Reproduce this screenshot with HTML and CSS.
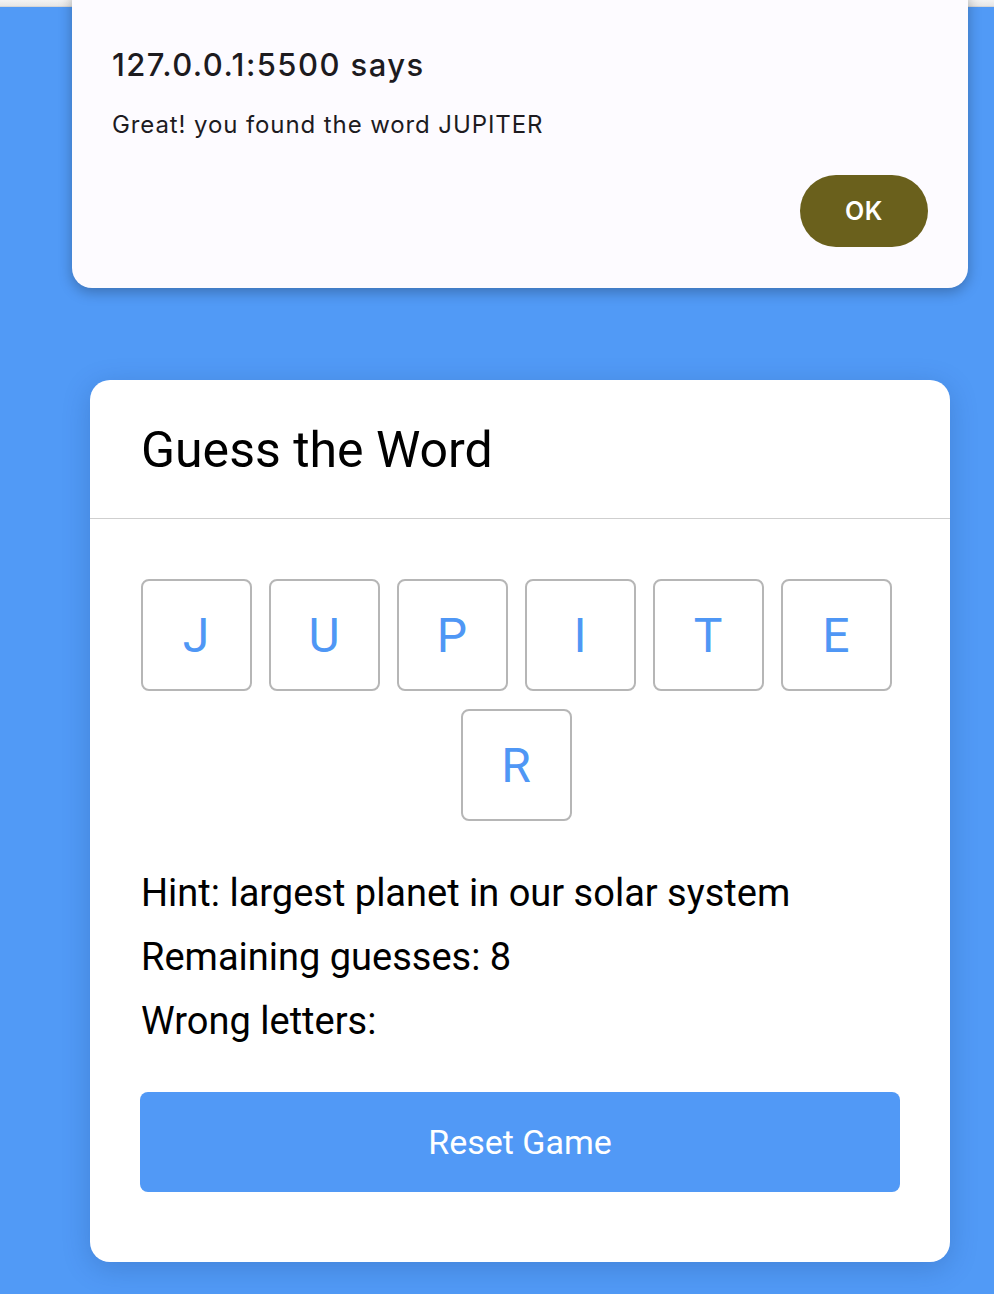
FILE: index.html
```html
<!DOCTYPE html>
<html lang="en">
<head>
<meta charset="utf-8">
<title>Guess the Word</title>
<link rel="stylesheet" href="styles.css">
</head>
<body>
<div class="topbar"></div>
<main class="page">
  <section class="card">
    <header class="card-header">
      <h1 class="card-title">Guess the Word</h1>
    </header>
    <div class="card-body">
      <div class="word">
        <div class="letter">J</div>
        <div class="letter">U</div>
        <div class="letter">P</div>
        <div class="letter">I</div>
        <div class="letter">T</div>
        <div class="letter">E</div>
        <div class="letter">R</div>
      </div>
      <p class="info">Hint: largest planet in our solar system</p>
      <p class="info">Remaining guesses: 8</p>
      <p class="info">Wrong letters:</p>
      <button class="reset" type="button">Reset Game</button>
    </div>
  </section>
</main>
<div class="dialog" role="alertdialog">
  <div class="dialog-title">127.0.0.1:5500 says</div>
  <div class="dialog-message">Great! you found the word JUPITER</div>
  <div class="dialog-actions">
    <button class="dialog-ok" type="button">OK</button>
  </div>
</div>
</body>
</html>
```

FILE: styles.css
```css
* { box-sizing: border-box; }

html, body {
  margin: 0;
  padding: 0;
}

body {
  background: #519af6;
  font-family: Roboto, "Liberation Sans", Arial, sans-serif;
  min-height: 1294px;
  position: relative;
  overflow: hidden;
}

.topbar {
  height: 7px;
  background: linear-gradient(#f3f3f3, #e6e6e6);
  border-bottom: 1px solid #d6d6d6;
}

.page {
  padding: 373px 44px 0 90px;
}

.card {
  width: 860px;
  background: #ffffff;
  border-radius: 20px;
  box-shadow: 0 6px 28px rgba(20, 50, 110, 0.22);
}

.card-header {
  padding: 42px 50px 40px 51px;
  border-bottom: 1px solid #cfcfcf;
}

.card-title {
  margin: 0;
  font-size: 50px;
  line-height: 56px;
  font-weight: 400;
  color: #000;
}

.card-body {
  padding: 60px 50px 70px 50px;
}

.word {
  display: flex;
  flex-wrap: wrap;
  justify-content: center;
  gap: 18px 17px;
  padding-right: 8px;
  margin-bottom: 50px;
}

.letter {
  width: 111px;
  height: 112px;
  border: 2px solid #b6b6b6;
  border-radius: 8px;
  display: flex;
  align-items: center;
  justify-content: center;
  font-size: 48px;
  color: #4f97f5;
}

.info {
  margin: 0 0 20px 1px;
  font-size: 38px;
  line-height: 44px;
  color: #000;
}

.info:last-of-type {
  margin-bottom: 0;
}

.reset {
  display: block;
  width: 760px;
  height: 100px;
  margin-top: 49px;
  border: none;
  border-radius: 8px;
  background: #5199f6;
  color: #ffffff;
  font-family: Roboto, "Liberation Sans", Arial, sans-serif;
  font-size: 34px;
}

.dialog {
  position: absolute;
  left: 72px;
  top: -20px;
  width: 896px;
  height: 308px;
  background: #fdfbff;
  border-radius: 20px;
  box-shadow: 0 4px 14px rgba(0, 0, 0, 0.28);
  padding: 67px 40px 40px 40px;
  font-family: Inter, "Noto Sans", sans-serif;
  color: #1d1b1f;
}

.dialog-title {
  font-size: 31px;
  line-height: 36px;
  font-weight: 500;
  letter-spacing: 1.45px;
}

.dialog-message {
  margin-top: 28px;
  font-size: 24px;
  line-height: 28px;
  letter-spacing: 0.9px;
}

.dialog-actions {
  display: flex;
  justify-content: flex-end;
  margin-top: 36px;
}

.dialog-ok {
  width: 128px;
  height: 72px;
  border: none;
  border-radius: 36px;
  background: #6a601c;
  color: #ffffff;
  font-family: Inter, "Noto Sans", sans-serif;
  font-size: 25px;
  font-weight: 600;
  letter-spacing: 0.5px;
}
```
